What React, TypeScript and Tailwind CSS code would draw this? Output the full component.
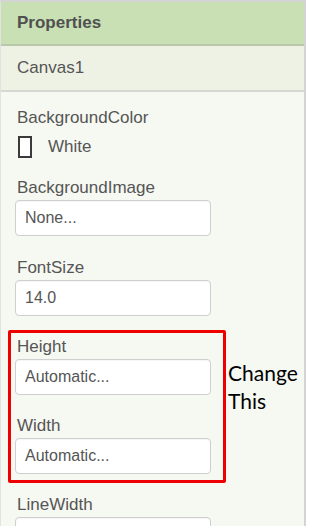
import React from "react";

const font = { fontFamily: '"Liberation Sans", Arial, sans-serif' };

function Label({ children }: { children: React.ReactNode }) {
  return (
    <p className="pl-[2px] text-[17px] leading-[20px] text-[#555]">{children}</p>
  );
}

function TextBox({ value }: { value: string }) {
  return (
    <div className="mt-[2px] flex h-[36px] w-[196px] items-center rounded-[4px] border border-[#cfcfcf] bg-white pl-[9px] text-[16px] leading-[20px] text-[#555] shadow-[inset_0_1px_1px_rgba(0,0,0,0.04)]">
      {value}
    </div>
  );
}

function Prop({ label, value }: { label: string; value?: string }) {
  return (
    <div>
      <Label>{label}</Label>
      {value !== undefined && <TextBox value={value} />}
    </div>
  );
}

export default function App() {
  return (
    <div className="h-[526px] w-[309px] overflow-hidden bg-white" style={font}>
      <div className="h-full w-[306px] border-t-2 border-r-2 border-l border-[#d4d4d4] border-l-[#e2e2e2] bg-[#f6f8f2]">
        {/* Header */}
        <div className="flex h-[44px] items-center border-b-2 border-[#b9c7ab] bg-[#c8e0b4] pl-[16px]">
          <span className="text-[17px] font-bold leading-[20px] text-[#505050]">
            Properties
          </span>
        </div>

        {/* Selected component */}
        <div className="flex h-[46px] items-center border-b-2 border-[#d6d8d2] bg-[#eef2e5] pl-[16px]">
          <span className="text-[17px] leading-[20px] text-[#555]">Canvas1</span>
        </div>

        {/* Property list */}
        <div className="px-[14px] pt-[16px]">
          <Prop label="BackgroundColor" />
          <div className="mt-[8px] flex h-[22px] items-center">
            <span className="ml-[3px] h-[22px] w-[14px] shrink-0 border-2 border-[#3a3a3a] bg-white" />
            <span className="ml-[16px] text-[17px] leading-[20px] text-[#555]">White</span>
          </div>

          <div className="mt-[20px]">
            <Prop label="BackgroundImage" value="None..." />
          </div>

          <div className="mt-[22px]">
            <Prop label="FontSize" value="14.0" />
          </div>

          {/* Highlighted size props */}
          <div className="-ml-[7px] mt-[14px] flex items-start">
            <div className="w-[218px] shrink-0 rounded-[2px] border-[3px] border-[#ee0000] pb-[6px] pl-[4px] pt-[4px]">
              <Prop label="Height" value="Automatic..." />
              <div className="mt-[21px]">
                <Prop label="Width" value="Automatic..." />
              </div>
            </div>
            <p
              className="ml-[2px] mt-[29px] shrink-0 text-[21px] leading-[28px] text-black"
              style={{ fontFamily: 'Lato, "Open Sans", sans-serif' }}
            >
              Change
              <br />
              This
            </p>
          </div>

          <div className="mt-[12px]">
            <Prop label="LineWidth" value="" />
          </div>
        </div>
      </div>
    </div>
  );
}
